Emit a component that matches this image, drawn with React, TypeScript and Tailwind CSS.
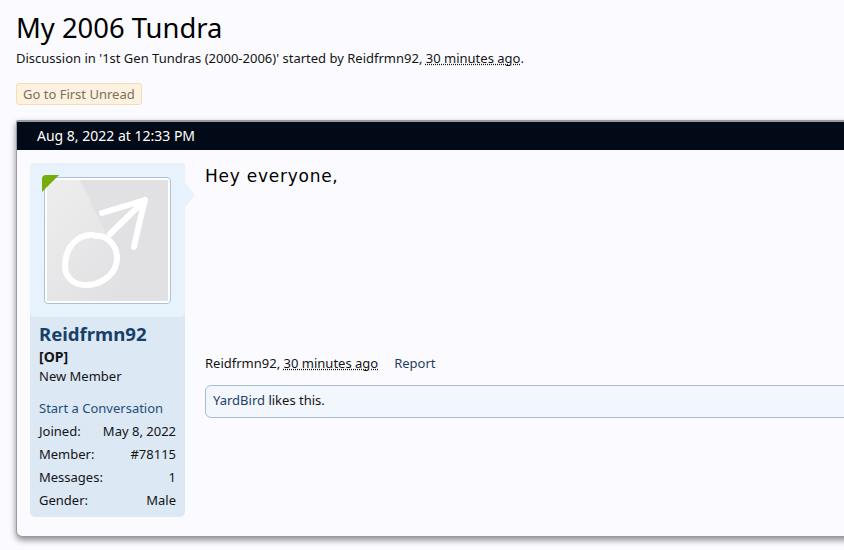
const STATS = [
  { label: 'Joined:', value: 'May 8, 2022' },
  { label: 'Member:', value: '#78115' },
  { label: 'Messages:', value: '1' },
  { label: 'Gender:', value: 'Male' },
];

export default function App() {
  return (
    <div className="h-[550px] w-[844px] overflow-hidden bg-[#fbfbff] pl-4 font-['Noto_Sans',sans-serif] text-[13px] text-[#141414]">
      <h1 className="pt-[11px] text-[27.4px] leading-[34px] text-black">My 2006 Tundra</h1>
      <p className="mt-[4px] leading-[18px]">
        Discussion in '1st Gen Tundras (2000-2006)' started by Reidfrmn92,{' '}
        <span className="underline decoration-dotted">30 minutes ago</span>.
      </p>

      <div className="mt-[16px] inline-block h-[22px] rounded-[3px] border border-[#f3dcb8] bg-[#fdf1e0] px-[6px] leading-[20px] text-[#7d6f5a]">
        Go to First Unread
      </div>

      <div className="mt-[15px] h-[417px] w-[900px] rounded-b-[6px] rounded-t-[2px] border border-t-2 border-[#9a9aa0] bg-[#fbfbff] shadow-[0_3px_6px_rgba(0,0,0,0.45)]">
        <div className="h-[28px] bg-[#020a17] pl-[20px] text-[14px] leading-[28px] text-white">Aug 8, 2022 at 12:33 PM</div>

        <div className="flex pl-[13px] pt-[13px]">
          <UserPanel />
          <div className="ml-[20px] flex h-[354px] w-[700px] flex-col">
            <div className="pt-[1px] font-['DejaVu_Sans',sans-serif] text-[17px] leading-[24px] tracking-[0.75px] text-black">Hey everyone,</div>
            <div className="mt-[166px] flex leading-[18px]">
              <span>
                Reidfrmn92, <span className="underline decoration-dotted">30 minutes ago</span>
              </span>
              <span className="ml-[16px] text-[#1f3f66]">Report</span>
            </div>
            <div className="mt-[13px] h-[33px] rounded-[6px] border border-[#a9bdd4] bg-[#f2f6fd] pl-[7px] leading-[29px]">
              <span className="text-[#1f3f66]">YardBird</span> likes this.
            </div>
          </div>
        </div>
      </div>
    </div>
  );
}

function UserPanel() {
  return (
    <div className="relative w-[155px] shrink-0 rounded-[5px] bg-[#dce8f4]">
      <div className="h-[154px] rounded-[5px] bg-[#e8f2fc] p-[14px]">
        <div className="relative h-[127px] w-[127px] rounded-[4px] border border-[#a9c4da] bg-white p-[2px]">
          <MaleAvatar />
          <svg viewBox="0 0 17 17" className="absolute left-[-3px] top-[-3px] h-[17px] w-[17px]" aria-hidden="true">
            <path d="M4 0H17L0 17V4Q0 0 4 0Z" fill="#76ac0c" />
          </svg>
        </div>
      </div>
      <svg viewBox="0 0 10 24" className="absolute left-full top-[20px] h-[24px] w-[10px]" aria-hidden="true">
        <path d="M0 0L10 12L0 24Z" fill="#e8f2fc" />
      </svg>
      <div className="px-[9px] pb-[5px] pt-[5px]">
        <div className="text-[18.6px] font-bold leading-[24px] text-[#17406a]">Reidfrmn92</div>
        <div className="mt-[2px] text-[14px] font-bold leading-[18px]">[OP]</div>
        <div className="leading-[20px]">New Member</div>
        <div className="mt-[12px] leading-[20px] text-[#1f4f78]">Start a Conversation</div>
        <div className="mt-[2px]">
          {STATS.map((s) => (
            <div key={s.label} className="flex h-[23px] items-center justify-between">
              <span>{s.label}</span>
              <span>{s.value}</span>
            </div>
          ))}
        </div>
      </div>
    </div>
  );
}

function MaleAvatar() {
  return (
    <svg viewBox="0 0 121 121" className="h-[121px] w-[121px]" aria-hidden="true">
      <defs>
        <linearGradient id="avatar-sheen" x1="0" y1="0" x2="0.75" y2="1">
          <stop offset="0" stopColor="#eeeeef" />
          <stop offset="1" stopColor="#e1e1e3" />
        </linearGradient>
      </defs>
      <rect width="121" height="121" fill="#e1e1e3" />
      <path d="M0 0H33L59 54L84 121H0Z" fill="url(#avatar-sheen)" />
      <g fill="none" stroke="#fff" strokeWidth="6" strokeLinecap="round" strokeLinejoin="round">
        <path d="M46 55C30 54 18 68 18 86C18 100 30 106 42 105C58 103 70 92 70 78C70 64 58 54 48 56" />
        <path d="M63 54L98 20M55 33L98 20C95 32 90 52 87 67" />
      </g>
    </svg>
  );
}
